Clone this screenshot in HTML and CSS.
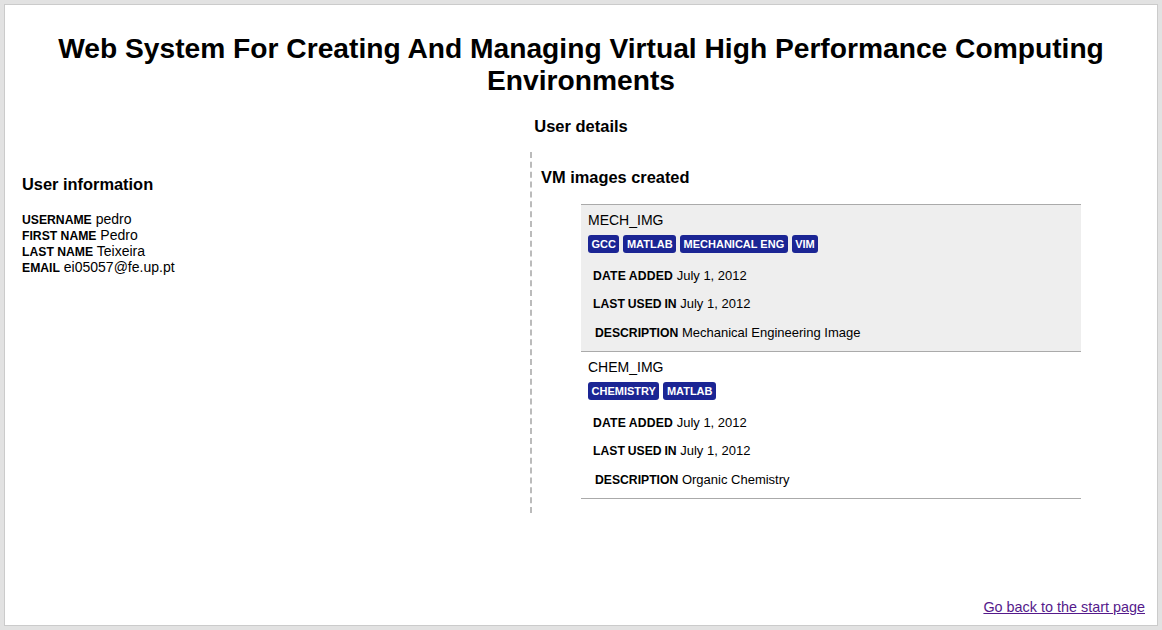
FILE: index.html
```html
<!DOCTYPE html>
<html>
<head>
<meta charset="utf-8">
<title>User details</title>
<link rel="stylesheet" href="styles.css">
</head>
<body>
<div class="page">
  <h1 class="title">Web System For Creating And Managing Virtual High Performance Computing Environments</h1>
  <h2 class="section-title">User details</h2>
  <div class="columns">
    <div class="col-left">
      <h3 class="col-heading">User information</h3>
      <div class="info">
        <div class="info-row"><span class="lbl">USERNAME</span> pedro</div>
        <div class="info-row"><span class="lbl">FIRST NAME</span> Pedro</div>
        <div class="info-row"><span class="lbl">LAST NAME</span> Teixeira</div>
        <div class="info-row"><span class="lbl">EMAIL</span> ei05057@fe.up.pt</div>
      </div>
    </div>
    <div class="col-right">
      <h3 class="col-heading vm-heading">VM images created</h3>
      <ul class="images">
        <li class="image odd">
          <div class="image-name">MECH_IMG</div>
          <div class="tags">
            <span class="tag">GCC</span>
            <span class="tag">MATLAB</span>
            <span class="tag">MECHANICAL ENG</span>
            <span class="tag">VIM</span>
          </div>
          <div class="row"><span class="lbl row-lbl date-lbl">DATE ADDED</span> July 1, 2012</div>
          <div class="row"><span class="lbl row-lbl">LAST USED IN</span> July 1, 2012</div>
          <div class="row desc"><span class="lbl row-lbl">DESCRIPTION</span> Mechanical Engineering Image</div>
        </li>
        <li class="image">
          <div class="image-name">CHEM_IMG</div>
          <div class="tags">
            <span class="tag">CHEMISTRY</span>
            <span class="tag">MATLAB</span>
          </div>
          <div class="row"><span class="lbl row-lbl date-lbl">DATE ADDED</span> July 1, 2012</div>
          <div class="row"><span class="lbl row-lbl">LAST USED IN</span> July 1, 2012</div>
          <div class="row desc"><span class="lbl row-lbl">DESCRIPTION</span> Organic Chemistry</div>
        </li>
      </ul>
    </div>
  </div>
  <div class="footer"><a href="#" class="back">Go back to the start page</a></div>
</div>
</body>
</html>
```
FILE: styles.css
```css
html, body {
  margin: 0;
  padding: 0;
  height: 100%;
}
body {
  background: #e2e2e2;
  font-family: "Liberation Sans", Arial, sans-serif;
  color: #000;
  padding: 4px;
  box-sizing: border-box;
}
.page {
  background: #fff;
  border: 1px solid #cbcbcb;
  height: 100%;
  box-sizing: border-box;
  display: flex;
  flex-direction: column;
}
.title {
  font-size: 28.2px;
  line-height: 32px;
  font-weight: bold;
  text-align: center;
  margin: 27px 40px 0;
}
.section-title {
  font-size: 16.5px;
  line-height: 20px;
  font-weight: bold;
  text-align: center;
  margin: 20px 0 0;
}
.columns {
  display: flex;
  margin-top: 16px;
}
.col-left {
  width: 508px;
  padding-left: 17px;
}
.col-heading {
  font-size: 16.4px;
  line-height: 20px;
  font-weight: bold;
  margin: 22px 0 0;
}
.info {
  margin-top: 17px;
  font-size: 14px;
}
.info-row {
  line-height: 16px;
  height: 16px;
}
.lbl {
  font-size: 12.2px;
  font-weight: bold;
  line-height: 1;
}
.row-lbl {
  font-size: 12.2px;
  word-spacing: -0.5px;
}
.date-lbl {
  letter-spacing: 0.2px;
}
.col-right {
  border-left: 2px dashed #bbb;
  padding-left: 9px;
  padding-bottom: 14px;
  flex: 1;
}
.vm-heading {
  margin-top: 15px;
}
.images {
  list-style: none;
  margin: 17px 0 0 40px;
  padding: 0;
  width: 500px;
  border-top: 1px solid #aaa;
}
.image {
  border-bottom: 1px solid #aaa;
  padding: 7px 0 4px 7px;
}
.image.odd {
  background: #eeeeee;
}
.image-name {
  font-size: 14px;
  line-height: 16px;
}
.tags {
  display: flex;
  gap: 4px;
  margin-top: 7px;
}
.tag {
  background: #1b2594;
  color: #fff;
  font-size: 11px;
  font-weight: bold;
  line-height: 18px;
  height: 18px;
  padding: 0 3.5px;
  border-radius: 3px;
}
.tags + .row {
  margin-top: 9px;
}
.row {
  font-size: 13px;
  line-height: 28px;
  height: 28px;
  padding-left: 5px;
}
.row.desc {
  padding-left: 7px;
  padding-top: 1px;
}
.footer {
  margin-top: auto;
  text-align: right;
  padding: 0 12px 10px 0;
  font-size: 14.4px;
  line-height: 16px;
}
.back {
  color: #551a8b;
}
```
